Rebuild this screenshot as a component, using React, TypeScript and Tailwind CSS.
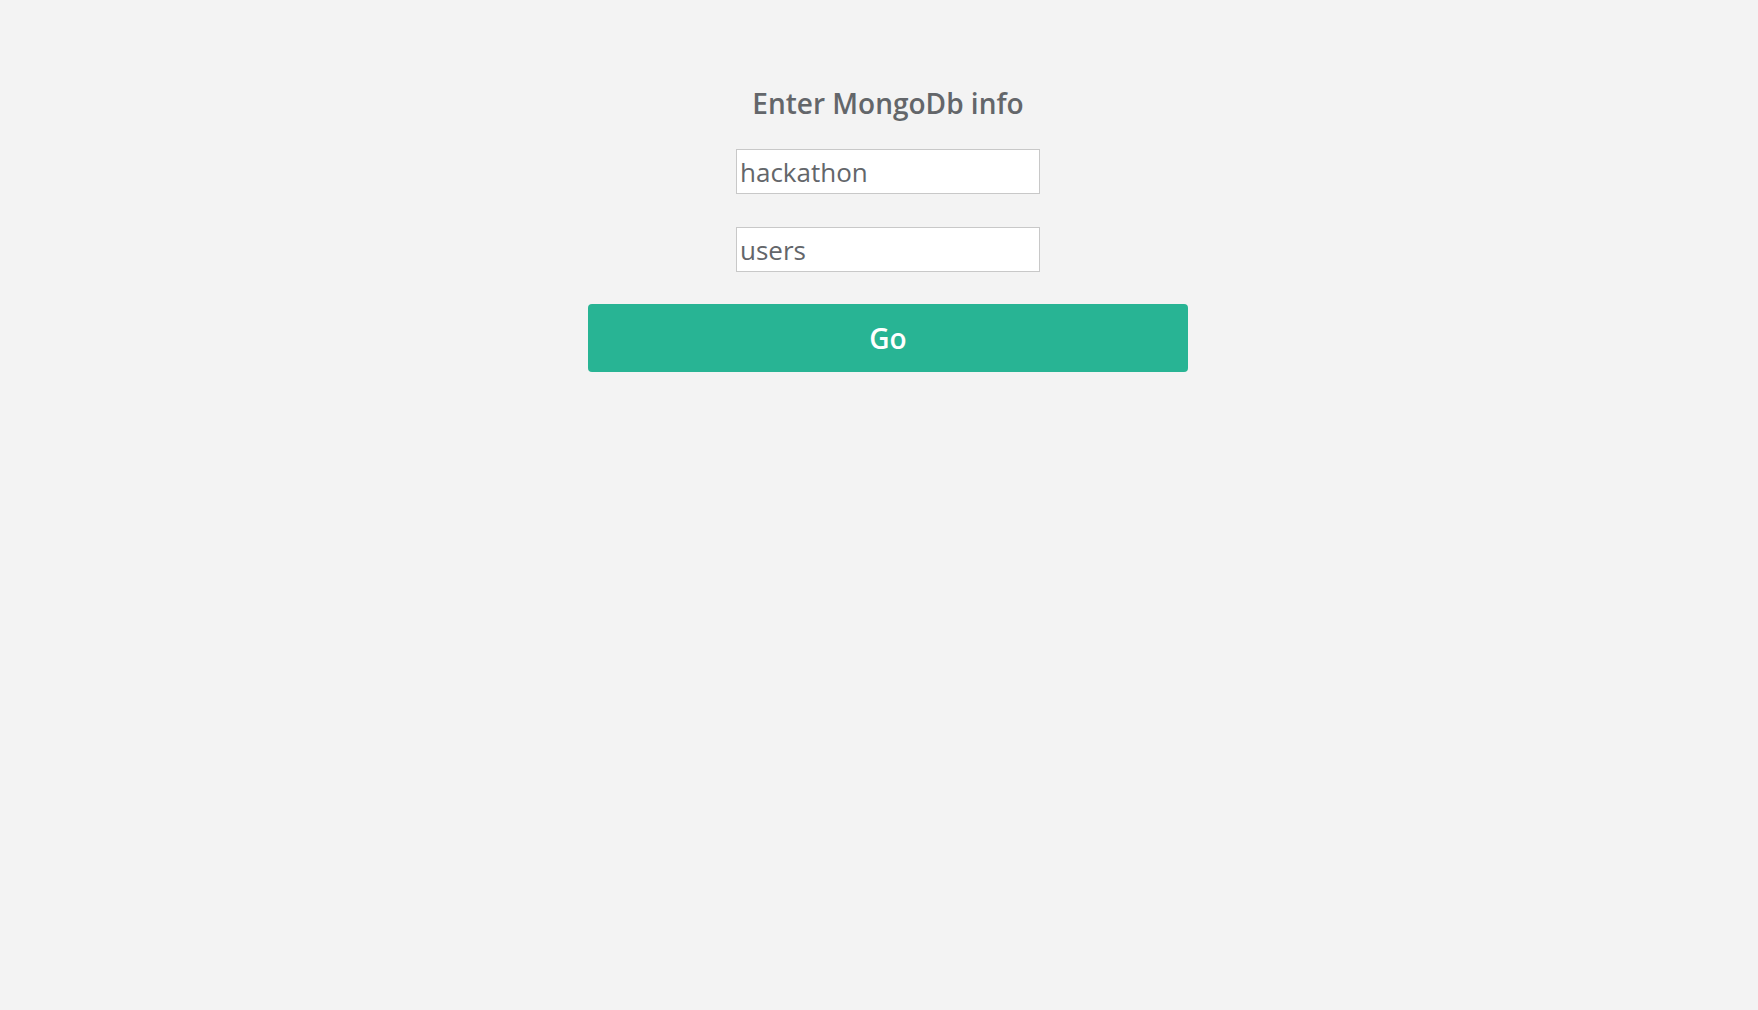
export default function App() {
  return (
    <div className="min-h-screen w-full bg-[#f3f3f3] font-['Open_Sans',sans-serif]">
      <div className="flex flex-col items-center pl-[18px] pt-[85px]">
        <h1 className="text-[28px] leading-[36px] font-semibold text-[#63666a]">Enter MongoDb info</h1>

        <input
          type="text"
          defaultValue="hackathon"
          className="mt-[28px] h-[45px] w-[304px] border border-[#c8c8c8] bg-white px-[3px] text-[26px] text-[#63666a] outline-none"
        />
        <input
          type="text"
          defaultValue="users"
          className="mt-[33px] h-[45px] w-[304px] border border-[#c8c8c8] bg-white px-[3px] text-[26px] text-[#63666a] outline-none"
        />

        <button className="mt-[32px] h-[68px] w-[600px] rounded-[4px] bg-[#28b494] text-[28px] font-semibold text-white">
          Go
        </button>
      </div>
    </div>
  );
}
